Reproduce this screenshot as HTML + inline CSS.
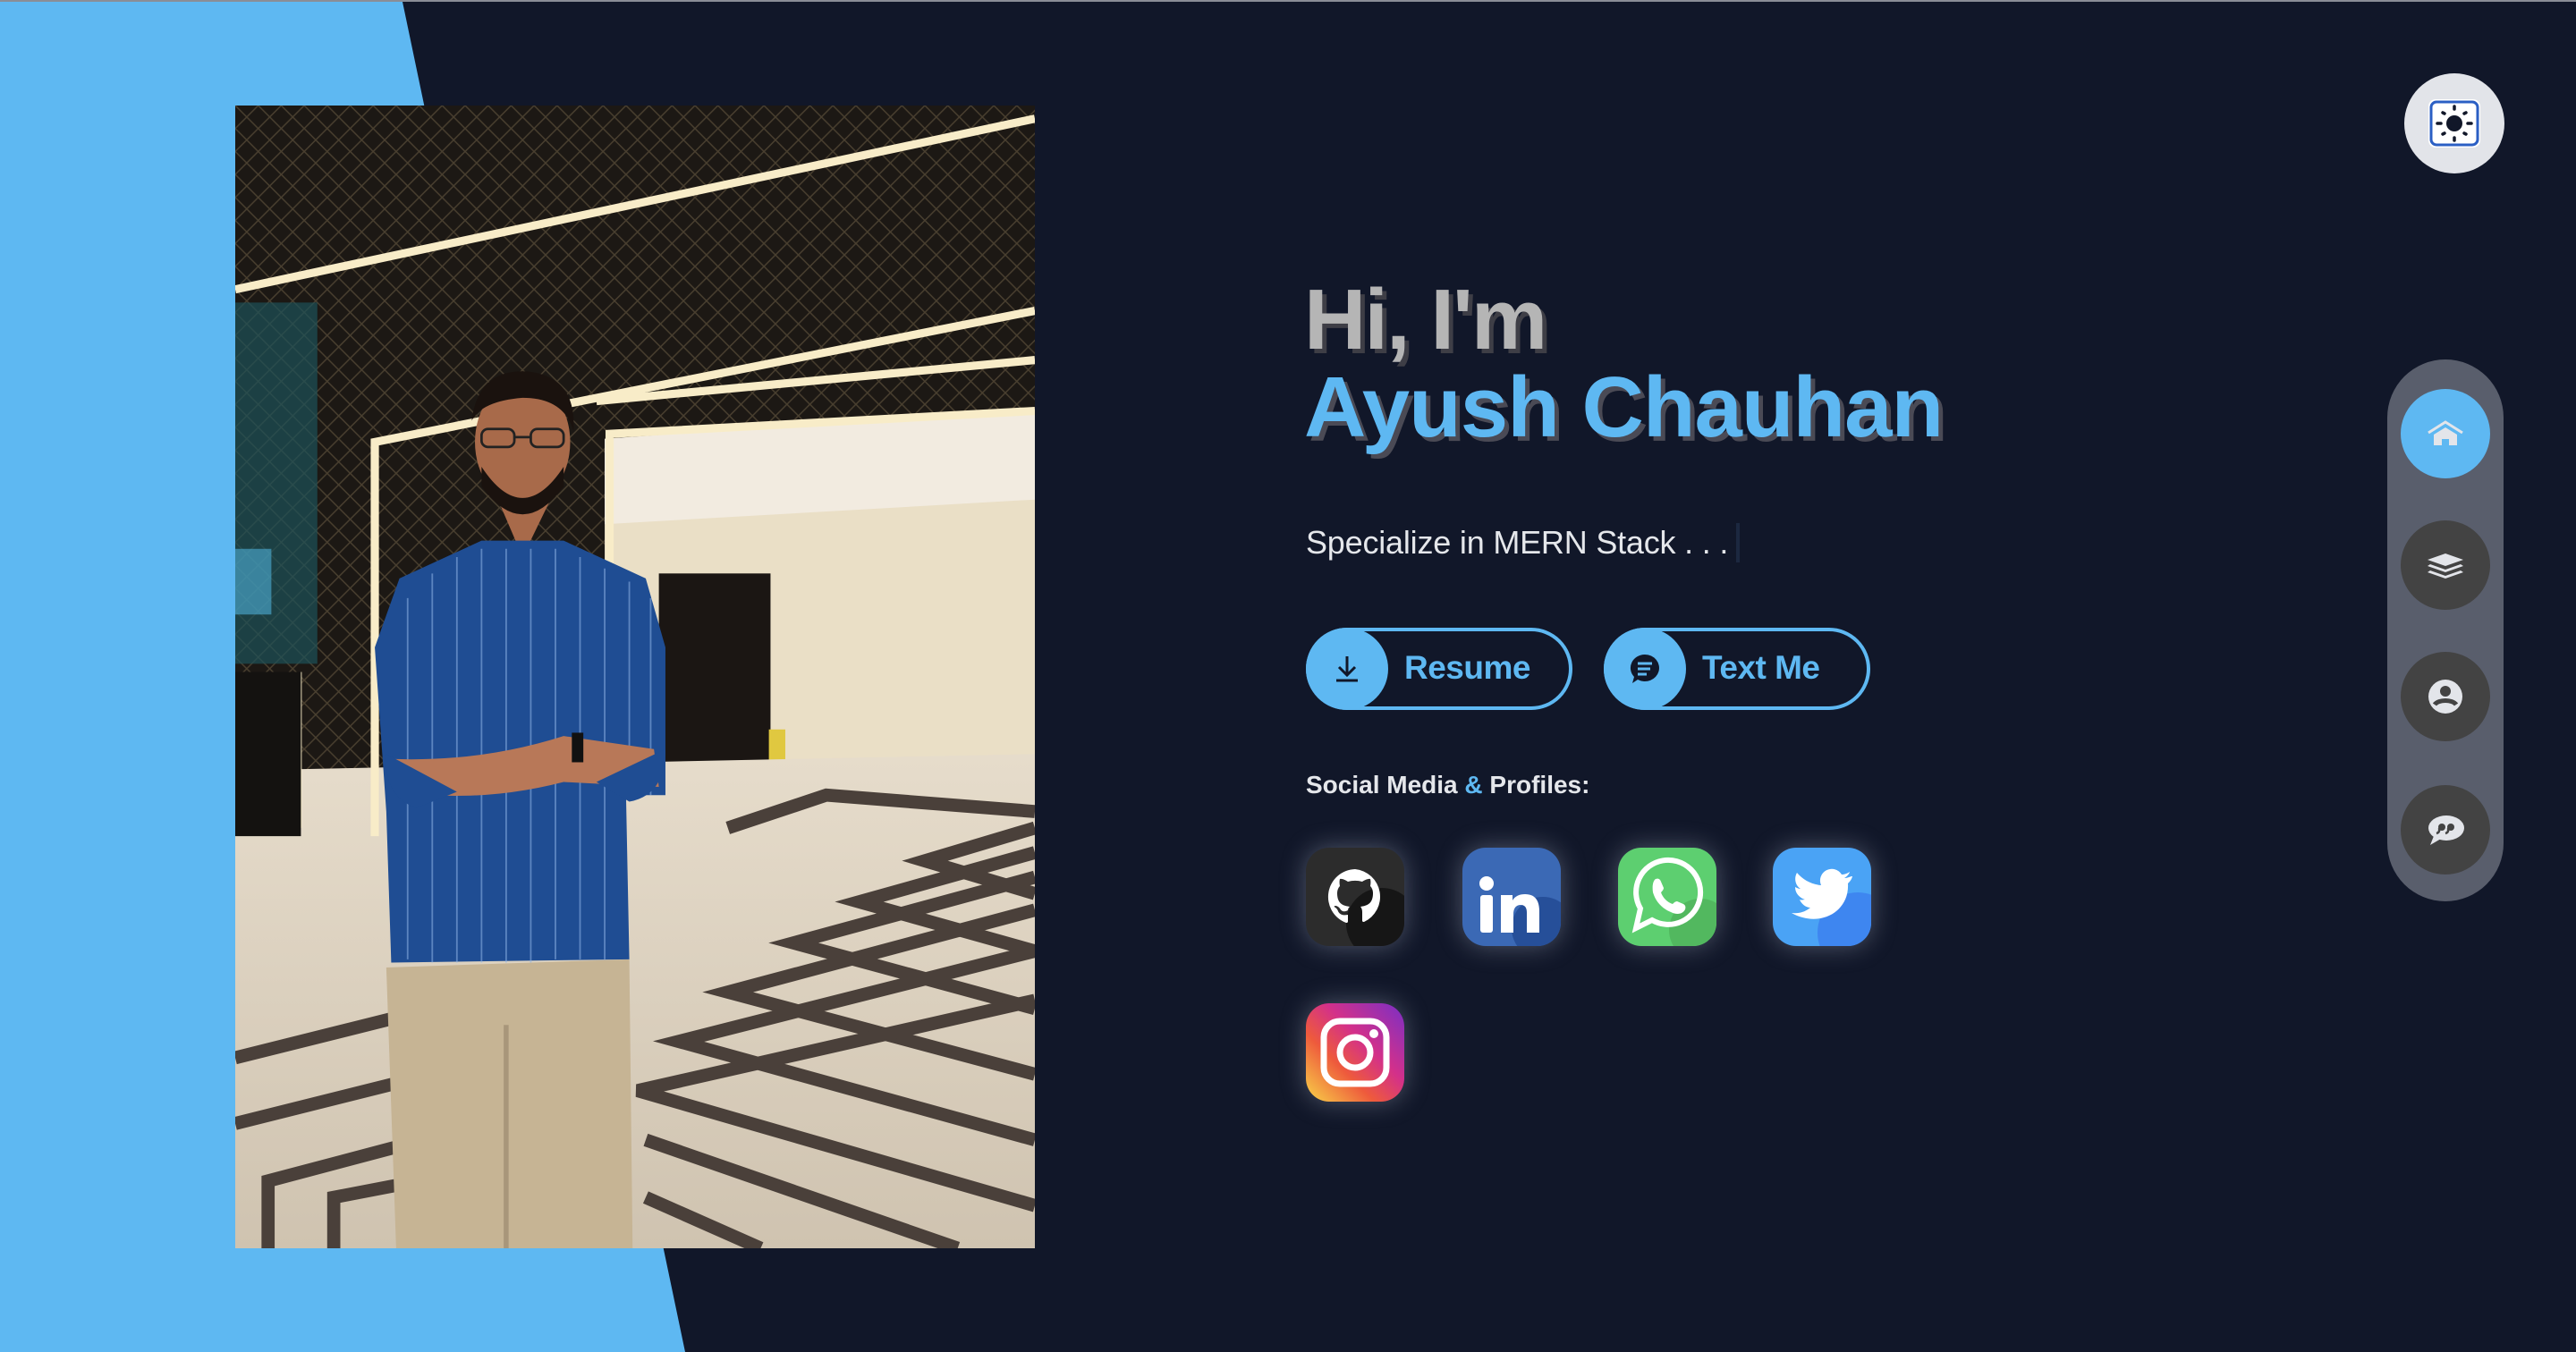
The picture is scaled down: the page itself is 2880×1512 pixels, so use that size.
<!DOCTYPE html>
<html><head><meta charset="utf-8"><style>
*{margin:0;padding:0;box-sizing:border-box}
body{width:2880px;height:1512px;overflow:hidden;background:#111729;font-family:"Liberation Sans",sans-serif;position:relative}
.topline{position:absolute;left:0;top:0;width:2880px;height:2px;background:#8a8d96}
.photo{position:absolute;left:263px;top:118px;width:894px;height:1278px}
.h1{position:absolute;left:1458px;top:308px;font-weight:700;font-size:96px;line-height:100px;letter-spacing:-2px;color:#b5b5b5;text-shadow:5px 5px 0 #3e3e46}
.h2{position:absolute;left:1458px;top:406px;font-weight:700;font-size:96px;line-height:100px;letter-spacing:-1px;color:#5eb8f2;text-shadow:5px 5px 0 #4a4a55}
.sub{position:absolute;left:1460px;top:586px;font-size:36px;color:#e5e7eb;letter-spacing:-0.2px}
.cursor{position:absolute;left:1941px;top:585px;width:4px;height:44px;background:#1c2840}
.btn{position:absolute;top:702px;width:298px;height:92px;border:4px solid #5eb8f2;border-radius:46px}
.btn .c{position:absolute;left:-4px;top:-4px;width:92px;height:92px;border-radius:50%;background:#5eb8f2}
.btn .c svg{position:absolute;left:26px;top:26px}
.btn span{position:absolute;left:106px;top:20px;font-size:37px;font-weight:700;color:#5eb8f2;letter-spacing:-0.5px}
.soc{position:absolute;left:1460px;top:862px;font-size:28px;color:#e5e7eb;font-weight:600}
.soc b{color:#5eb8f2;font-weight:600}
.ic{position:absolute;width:110px;height:110px;border-radius:26px;overflow:hidden;box-shadow:0 0 28px rgba(200,210,230,.35)}
.toggle{position:absolute;left:2688px;top:82px;width:112px;height:112px;border-radius:50%;background:#e2e4e9}
.bar{position:absolute;left:2669px;top:402px;width:130px;height:606px;border-radius:65px;background:#595e6c}
.nb{position:absolute;left:15px;width:100px;height:100px;border-radius:50%;background:#434343}
.nb svg{position:absolute;left:25px;top:25px}
</style></head><body>
<div class="topline"></div>
<svg style="position:absolute;left:0;top:0" width="2880" height="1512"><polygon points="0,2 450,2 766,1512 0,1512" fill="#5eb8f2"/></svg>

<svg class="photo" viewBox="0 0 487 696" preserveAspectRatio="none">
<defs>
<pattern id="mesh" width="14" height="14" patternUnits="userSpaceOnUse"><path d="M0 0L14 14M14 0L0 14" stroke="#4a4030" stroke-width="0.8"/></pattern>
<linearGradient id="fl" x1="0" y1="0" x2="0" y2="1"><stop offset="0" stop-color="#e6dccb"/><stop offset="1" stop-color="#cfc3b0"/></linearGradient>
</defs>
<rect width="487" height="696" fill="#1c1814"/>
<rect width="487" height="440" fill="url(#mesh)"/>
<rect x="0" y="120" width="50" height="220" fill="#1d5158" opacity=".7"/>
<rect x="0" y="270" width="22" height="40" fill="#4fb0d8" opacity=".6"/>
<polygon points="225,203 487,185 487,410 225,420" fill="#eadfc6"/>
<polygon points="225,203 487,185 487,240 225,255" fill="#f2ebe0"/>
<rect x="258" y="285" width="68" height="115" fill="#1b1613"/>
<rect x="325" y="380" width="10" height="20" fill="#e0c840"/>
<polygon points="0,405 487,395 487,696 0,696" fill="url(#fl)"/>
<g stroke="#f8ecc8" stroke-width="5" fill="none">
<path d="M0 112 L487 8"/>
<path d="M85 445 V205 L487 125"/>
<path d="M220 180 L487 155"/>
<path d="M228 420 V200 L487 186"/>
<path d="M38 345 V440"/>
</g>
<rect x="0" y="345" width="40" height="100" fill="#141210"/>
<g stroke="#4a403a" stroke-width="8" fill="none">
<path d="M487 440 L420 460 L487 480"/><path d="M487 455 L380 485 L487 515"/>
<path d="M487 470 L340 510 L487 550"/><path d="M487 490 L300 540 L487 590"/>
<path d="M487 515 L270 570 L487 630"/><path d="M487 545 L245 600 L487 670"/>
<path d="M250 630 L440 696"/><path d="M250 665 L320 696"/>
<path d="M0 580 L200 530"/><path d="M0 620 L200 570"/><path d="M20 696 V655 L190 610"/><path d="M60 696 V665 L190 640"/>
<path d="M300 440 L360 420 L487 430"/>
</g>
<polygon points="92,525 240,520 242,696 98,696" fill="#c6b494"/>
<path d="M165 560 V696" stroke="#a8967a" stroke-width="3"/>
<path d="M160 240 L175 275 L192 240 L190 225 L160 225Z" fill="#a86a4a"/>
<polygon points="100,288 150,265 200,265 250,288 262,330 262,420 238,420 240,520 95,522 92,430 85,330" fill="#1f4d93"/>
<g stroke="#8fb4e6" stroke-width="1" opacity=".55"><path d="M105 300V520M120 285V522M135 275V522M150 270V522M165 270V522M180 270V522M195 270V520M210 275V520M225 282V520M240 290V420M253 300V420"/></g>
<path d="M95 398 Q150 400 200 384 L255 392 L258 415 L200 412 Q150 425 100 418Z" fill="#b87858"/>
<path d="M92 395 Q90 420 110 428 L135 418Z" fill="#1f4d93"/>
<path d="M262 392 Q262 420 240 424 L220 412Z" fill="#1f4d93"/>
<rect x="205" y="382" width="7" height="18" fill="#111"/>
<ellipse cx="175" cy="205" rx="29" ry="38" fill="#a86a4a"/>
<path d="M144 192 Q148 160 178 162 Q208 165 206 198 Q200 178 175 178 Q150 180 144 192Z" fill="#1a120e"/>
<path d="M150 220 Q175 258 200 220 L200 232 Q175 266 150 232Z" fill="#1a120e"/>
<g stroke="#222" stroke-width="1.5" fill="none"><rect x="150" y="197" width="20" height="11" rx="4"/><rect x="180" y="197" width="20" height="11" rx="4"/><path d="M170 202h10"/></g>
</svg>

<div class="h1">Hi, I'm</div>
<div class="h2">Ayush Chauhan</div>
<div class="sub">Specialize in MERN Stack . . .</div>
<div class="cursor"></div>

<div class="btn" style="left:1460px"><div class="c"><svg width="40" height="40" viewBox="0 0 40 40"><path d="M20 6V26M11 18L20 27L29 18M8 33H32" stroke="#111729" stroke-width="3" fill="none"/></svg></div><span>Resume</span></div>
<div class="btn" style="left:1793px"><div class="c"><svg width="40" height="40" viewBox="0 0 40 40"><path d="M20 4a16 15 0 1 1-8 28L6 36l2-7A16 15 0 0 1 20 4z" fill="#111729"/><path d="M12 14h16M12 20h14M12 26h10" stroke="#5eb8f2" stroke-width="3"/></svg></div><span>Text Me</span></div>

<div class="soc">Social Media <b>&amp;</b> Profiles:</div>

<div class="ic" style="left:1460px;top:948px;background:#2c2c2c">
<svg width="110" height="110" viewBox="0 0 110 110"><circle cx="85" cy="85" r="40" fill="#161616"/><path d="M55 24a31 31 0 0 0-10 60c2 0 2-1 2-2v-7c-9 2-11-4-11-4-1-3-3-4-3-4-3-2 0-2 0-2 3 0 5 3 5 3 3 5 7 3 9 2 0-2 1-3 2-4-7-1-14-3-14-15 0-3 1-6 3-8 0-1-1-4 0-8 0 0 3-1 9 3a30 30 0 0 1 16 0c6-4 9-3 9-3 1 4 0 7 0 8 2 2 3 5 3 8 0 12-7 14-14 15 1 1 2 3 2 6v9c0 1 0 2 2 2A31 31 0 0 0 55 24z" fill="#fff"/></svg></div>
<div class="ic" style="left:1635px;top:948px;background:#3b69b5">
<svg width="110" height="110" viewBox="0 0 110 110"><circle cx="90" cy="90" r="35" fill="#264f99"/><circle cx="27" cy="40" r="8" fill="#fff"/><rect x="20" y="53" width="14" height="42" rx="3" fill="#fff"/><path d="M43 53h13v6c3-5 8-7 14-7 12 0 16 8 16 19v24H72V73c0-6-2-9-7-9s-8 4-8 10v21H43z" fill="#fff"/></svg></div>
<div class="ic" style="left:1809px;top:948px;background:#5dcf70">
<svg width="110" height="110" viewBox="0 0 110 110"><circle cx="92" cy="92" r="35" fill="#52b85f"/><path d="M20 90l5-22a36 36 0 1 1 13 13z" fill="none" stroke="#fff" stroke-width="6"/><path d="M42 35c3-1 5 0 6 3l3 7c0 2-2 4-3 5 2 6 7 11 13 13 1-1 3-3 5-3l7 3c2 1 3 3 2 6-3 6-10 6-16 3-10-4-17-12-20-22-1-7 0-13 3-15z" fill="#fff"/></svg></div>
<div class="ic" style="left:1982px;top:948px;background:#4aa3f5">
<svg width="110" height="110" viewBox="0 0 110 110"><circle cx="95" cy="95" r="45" fill="#3e86f0"/><path d="M88 32c-3 1-5 2-8 2 3-2 5-4 6-7-3 2-6 3-9 3a13 13 0 0 0-23 12c-11-1-20-6-27-14-4 7-1 15 4 18-2 0-4-1-6-2 0 7 5 12 11 14-2 0-4 1-6 0 2 5 7 9 12 9-6 5-13 7-21 6 30 17 65 0 63-33 2-2 4-4 5-8z" fill="#fff"/></svg></div>
<div class="ic" style="left:1460px;top:1122px;background:linear-gradient(45deg,#f8d548 0%,#ee5a3c 35%,#d3308a 60%,#7a2fc6 100%)">
<svg width="110" height="110" viewBox="0 0 110 110"><rect x="20" y="20" width="70" height="70" rx="18" fill="none" stroke="#fff" stroke-width="7"/><circle cx="55" cy="55" r="17" fill="none" stroke="#fff" stroke-width="7"/><circle cx="76" cy="34" r="5" fill="#fff"/></svg></div>

<div class="toggle"><svg style="position:absolute;left:24px;top:24px" width="64" height="64" viewBox="0 0 64 64"><rect x="3" y="5" width="58" height="54" rx="8" fill="#fff"/><rect x="6" y="8" width="52" height="48" rx="6" fill="none" stroke="#2b5fc4" stroke-width="3"/><circle cx="32" cy="32" r="9" fill="#111729"/><g stroke="#111729" stroke-width="3.5" stroke-linecap="round"><path d="M32 13v3M32 48v3M13 32h4M47 32h4M19 20l2 1M43 43l2 1M45 20l-2 1M21 43l-2 1"/></g></svg></div>

<div class="bar">
<div class="nb" style="top:33px;background:#5eb8f2"><svg width="50" height="50" viewBox="0 0 50 50"><path d="M6 24L25 12L44 24" stroke="#e3e5ea" stroke-width="3" fill="none"/><path d="M12 26L25 18L38 26V38H29V31H21V38H12Z" fill="#e3e5ea"/></svg></div>
<div class="nb" style="top:180px"><svg width="50" height="50" viewBox="0 0 50 50"><path d="M25 12L45 19L25 26L5 19Z" fill="#e3e5ea"/><path d="M8 24L25 30L42 24L45 26L25 33L5 26Z" fill="#e3e5ea"/><path d="M8 31L25 37L42 31L45 33L25 40L5 33Z" fill="#e3e5ea"/></svg></div>
<div class="nb" style="top:327px"><svg width="50" height="50" viewBox="0 0 50 50"><circle cx="25" cy="25" r="19" fill="#e3e5ea"/><circle cx="25" cy="19" r="6" fill="#434343"/><path d="M13 34c4-6 20-6 24 0" stroke="#434343" stroke-width="5" fill="none"/></svg></div>
<div class="nb" style="top:476px"><svg width="50" height="50" viewBox="0 0 50 50"><ellipse cx="26" cy="23" rx="20" ry="14" fill="#e3e5ea"/><path d="M12 32L8 42L20 35Z" fill="#e3e5ea"/><circle cx="21" cy="22" r="4" fill="#434343"/><circle cx="31" cy="22" r="4" fill="#434343"/><path d="M18 23q1 5-3 6M28 23q1 5-3 6" stroke="#434343" stroke-width="2.5" fill="none"/></svg></div>
</div>
</body></html>
